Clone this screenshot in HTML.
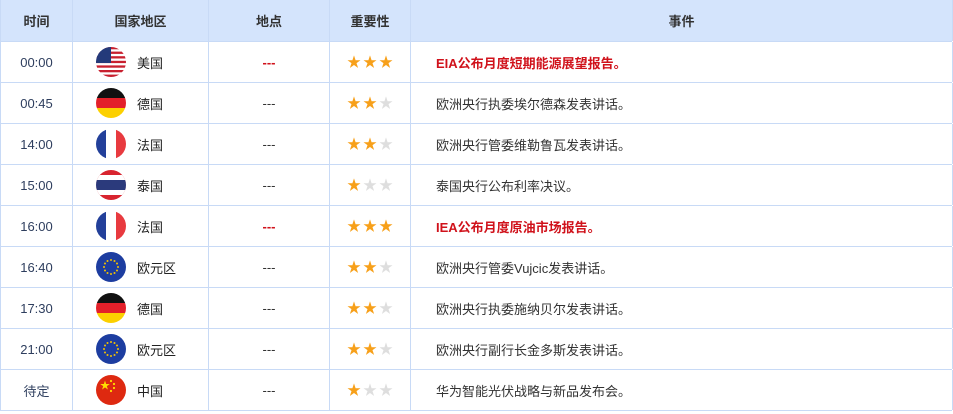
<!DOCTYPE html>
<html><head><meta charset="utf-8"><style>
body{margin:0;background:#fff;font-family:"Liberation Sans","Noto Sans CJK SC",sans-serif;}
.t{position:relative;width:953px;height:414px;}
.row{position:absolute;left:0;width:952px;border-bottom:1px solid #c8daf6;}
.c{position:absolute;top:0;height:100%;display:flex;align-items:center;justify-content:center;font-size:13px;color:#333;border-left:1px solid #c8daf6;box-sizing:border-box;}
.h .c{font-weight:bold;color:#333;}
.h{background:#d4e4fc;}
.c1{left:0;width:72px;color:#2e3e5e;}
.c2{left:72px;width:136px;justify-content:flex-start;padding-left:23px;}
.c2 b{font-weight:400;color:#222}
.c3{left:208px;width:121px;}
.c4{left:329px;width:81px;}
.c5{left:410px;width:543px;border-right:1px solid #c8daf6;justify-content:flex-start;padding-left:25px;}
.h .c2,.h .c5{justify-content:center;padding-left:0;}
.flag{width:30px;height:30px;border-radius:50%;overflow:hidden;margin-right:11px;flex:none}
.st{font-size:14px;letter-spacing:2px;color:#f7a01a;margin-left:2px}
.g{color:#dedede}
.red{color:#d0121b;font-weight:bold}
</style></head><body><div class="t">
<div class="row h" style="top:0;height:41px"><div class="c c1" style="color:#333">时间</div><div class="c c2">国家地区</div><div class="c c3">地点</div><div class="c c4">重要性</div><div class="c c5">事件</div></div>

<div class="row" style="top:42px;height:40px"><div class="c c1">00:00</div><div class="c c2"><svg class="flag" viewBox="0 0 30 30"><rect width="30" height="30" fill="#fff"/><g fill="#c8202f"><rect y="0" width="30" height="2.3"/><rect y="4.6" width="30" height="2.3"/><rect y="9.2" width="30" height="2.3"/><rect y="13.8" width="30" height="2.3"/><rect y="18.4" width="30" height="2.3"/><rect y="23" width="30" height="2.3"/><rect y="27.6" width="30" height="2.4"/></g><rect width="15" height="16" fill="#243a7a"/></svg><b>美国</b></div><div class="c c3 red">---</div><div class="c c4"><span class="st">★★★</span></div><div class="c c5 red">EIA公布月度短期能源展望报告。</div></div>

<div class="row" style="top:83px;height:40px"><div class="c c1">00:45</div><div class="c c2"><svg class="flag" viewBox="0 0 30 30"><rect width="30" height="10" fill="#111"/><rect y="10" width="30" height="10" fill="#e3202a"/><rect y="20" width="30" height="10" fill="#fcd000"/></svg><b>德国</b></div><div class="c c3">---</div><div class="c c4"><span class="st">★★<span class="g">★</span></span></div><div class="c c5">欧洲央行执委埃尔德森发表讲话。</div></div>

<div class="row" style="top:124px;height:40px"><div class="c c1">14:00</div><div class="c c2"><svg class="flag" viewBox="0 0 30 30"><rect width="10" height="30" fill="#23409a"/><rect x="10" width="10" height="30" fill="#fff"/><rect x="20" width="10" height="30" fill="#e83a3f"/></svg><b>法国</b></div><div class="c c3">---</div><div class="c c4"><span class="st">★★<span class="g">★</span></span></div><div class="c c5">欧洲央行管委维勒鲁瓦发表讲话。</div></div>

<div class="row" style="top:165px;height:40px"><div class="c c1">15:00</div><div class="c c2"><svg class="flag" viewBox="0 0 30 30"><rect width="30" height="30" fill="#d8242f"/><rect y="5" width="30" height="20" fill="#fff"/><rect y="10" width="30" height="10" fill="#2b3a7c"/></svg><b>泰国</b></div><div class="c c3">---</div><div class="c c4"><span class="st">★<span class="g">★★</span></span></div><div class="c c5">泰国央行公布利率决议。</div></div>

<div class="row" style="top:206px;height:40px"><div class="c c1">16:00</div><div class="c c2"><svg class="flag" viewBox="0 0 30 30"><rect width="10" height="30" fill="#23409a"/><rect x="10" width="10" height="30" fill="#fff"/><rect x="20" width="10" height="30" fill="#e83a3f"/></svg><b>法国</b></div><div class="c c3 red">---</div><div class="c c4"><span class="st">★★★</span></div><div class="c c5 red">IEA公布月度原油市场报告。</div></div>

<div class="row" style="top:247px;height:40px"><div class="c c1">16:40</div><div class="c c2"><svg class="flag" viewBox="0 0 30 30"><rect width="30" height="30" fill="#1d3da0"/><g fill="#f2c200"><circle cx="15" cy="8" r="1"/><circle cx="18.5" cy="9" r="1"/><circle cx="21" cy="11.5" r="1"/><circle cx="22" cy="15" r="1"/><circle cx="21" cy="18.5" r="1"/><circle cx="18.5" cy="21" r="1"/><circle cx="15" cy="22" r="1"/><circle cx="11.5" cy="21" r="1"/><circle cx="9" cy="18.5" r="1"/><circle cx="8" cy="15" r="1"/><circle cx="9" cy="11.5" r="1"/><circle cx="11.5" cy="9" r="1"/></g></svg><b>欧元区</b></div><div class="c c3">---</div><div class="c c4"><span class="st">★★<span class="g">★</span></span></div><div class="c c5">欧洲央行管委Vujcic发表讲话。</div></div>

<div class="row" style="top:288px;height:40px"><div class="c c1">17:30</div><div class="c c2"><svg class="flag" viewBox="0 0 30 30"><rect width="30" height="10" fill="#111"/><rect y="10" width="30" height="10" fill="#e3202a"/><rect y="20" width="30" height="10" fill="#fcd000"/></svg><b>德国</b></div><div class="c c3">---</div><div class="c c4"><span class="st">★★<span class="g">★</span></span></div><div class="c c5">欧洲央行执委施纳贝尔发表讲话。</div></div>

<div class="row" style="top:329px;height:40px"><div class="c c1">21:00</div><div class="c c2"><svg class="flag" viewBox="0 0 30 30"><rect width="30" height="30" fill="#1d3da0"/><g fill="#f2c200"><circle cx="15" cy="8" r="1"/><circle cx="18.5" cy="9" r="1"/><circle cx="21" cy="11.5" r="1"/><circle cx="22" cy="15" r="1"/><circle cx="21" cy="18.5" r="1"/><circle cx="18.5" cy="21" r="1"/><circle cx="15" cy="22" r="1"/><circle cx="11.5" cy="21" r="1"/><circle cx="9" cy="18.5" r="1"/><circle cx="8" cy="15" r="1"/><circle cx="9" cy="11.5" r="1"/><circle cx="11.5" cy="9" r="1"/></g></svg><b>欧元区</b></div><div class="c c3">---</div><div class="c c4"><span class="st">★★<span class="g">★</span></span></div><div class="c c5">欧洲央行副行长金多斯发表讲话。</div></div>

<div class="row" style="top:370px;height:40px"><div class="c c1">待定</div><div class="c c2"><svg class="flag" viewBox="0 0 30 30"><rect width="30" height="30" fill="#de2910"/><text x="4" y="14" font-size="10" fill="#ffde00">★</text><g fill="#ffde00"><circle cx="15" cy="6" r="1.1"/><circle cx="18" cy="9" r="1.1"/><circle cx="18" cy="13" r="1.1"/><circle cx="15" cy="16" r="1.1"/></g></svg><b>中国</b></div><div class="c c3">---</div><div class="c c4"><span class="st">★<span class="g">★★</span></span></div><div class="c c5">华为智能光伏战略与新品发布会。</div></div>
</div></body></html>
